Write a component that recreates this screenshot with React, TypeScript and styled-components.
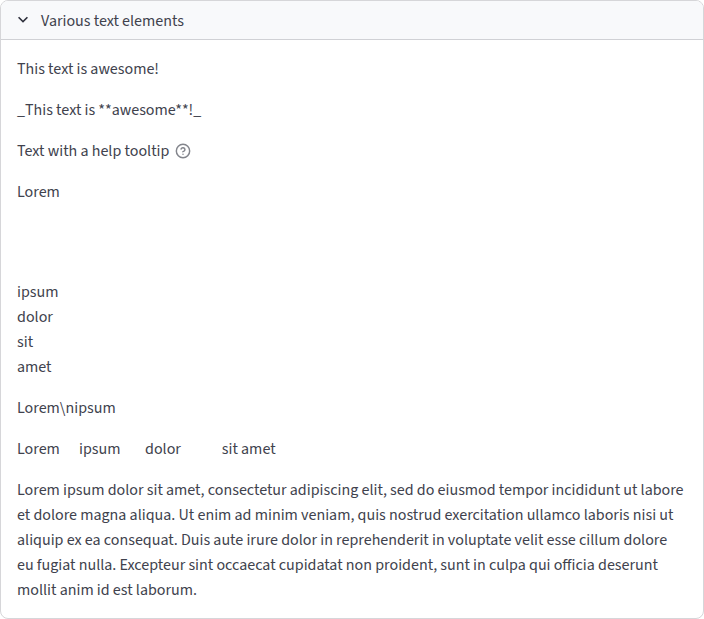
import React from "react";
import styled, { createGlobalStyle } from "styled-components";

const GlobalStyle = createGlobalStyle`
  *, *::before, *::after { box-sizing: border-box; }
  body {
    margin: 0;
    background: #ffffff;
    color: #40424d;
    font-family: "Source Sans 3", "Source Sans Pro", "Noto Sans CJK SC", sans-serif;
    font-size: 16px;
    font-weight: 400;
    line-height: 25px;
  }
`;

const Expander = styled.section`
  border: 1px solid rgba(49, 51, 63, 0.2);
  border-radius: 8px;
  overflow: hidden;
`;

const Summary = styled.header`
  display: flex;
  align-items: center;
  gap: 8px;
  height: 39px;
  padding: 0 12px;
  background: #f8f9fb;
  border-bottom: 1px solid rgba(49, 51, 63, 0.2);
`;

const Title = styled.span`
  padding-top: 2px;
`;

const Chevron = styled.svg`
  width: 20px;
  height: 20px;
  flex: none;
  fill: #31333f;
`;

const Content = styled.div`
  display: flex;
  flex-direction: column;
  gap: 16px;
  padding: 17px 16px 15px;
`;

const Text = styled.div`
  white-space: pre-wrap;
`;

const HelpRow = styled.div`
  display: flex;
  align-items: flex-start;
  gap: 6px;
`;

const HelpIcon = styled.svg`
  width: 16px;
  height: 16px;
  margin-top: 4px;
  flex: none;
  fill: none;
  stroke: #83858c;
  stroke-width: 2.2;
  stroke-linecap: round;
  stroke-linejoin: round;
`;

export default function App() {
  return (
    <>
      <GlobalStyle />
      <Expander>
        <Summary>
          <Chevron viewBox="0 0 24 24" aria-hidden="true">
            <path d="M12 15.4 6 9.4 7.4 8l4.6 4.6L16.6 8 18 9.4Z" />
          </Chevron>
          <Title>Various text elements</Title>
        </Summary>
        <Content>
          <Text>This text is awesome!</Text>
          <Text>_This text is **awesome**!_</Text>
          <HelpRow>
            <Text>Text with a help tooltip</Text>
            <HelpIcon viewBox="0 0 24 24" aria-label="Help">
              <circle cx="12" cy="12" r="10" />
              <path d="M9.09 9a3 3 0 0 1 5.83 1c0 2-3 3-3 3" />
              <path d="M12 17h.01" />
            </HelpIcon>
          </HelpRow>
          <Text>{"Lorem\n\n\n\nipsum\ndolor\nsit\namet"}</Text>
          <Text>{"Lorem\\nipsum"}</Text>
          <Text>{"Lorem      ipsum\tdolor\t\tsit amet"}</Text>
          <Text>
            Lorem ipsum dolor sit amet, consectetur adipiscing elit, sed do eiusmod tempor
            incididunt ut labore et dolore magna aliqua. Ut enim ad minim veniam, quis nostrud
            exercitation ullamco laboris nisi ut aliquip ex ea consequat. Duis aute irure dolor in
            reprehenderit in voluptate velit esse cillum dolore eu fugiat nulla. Excepteur sint
            occaecat cupidatat non proident, sunt in culpa qui officia deserunt mollit anim id est
            laborum.
          </Text>
        </Content>
      </Expander>
    </>
  );
}
